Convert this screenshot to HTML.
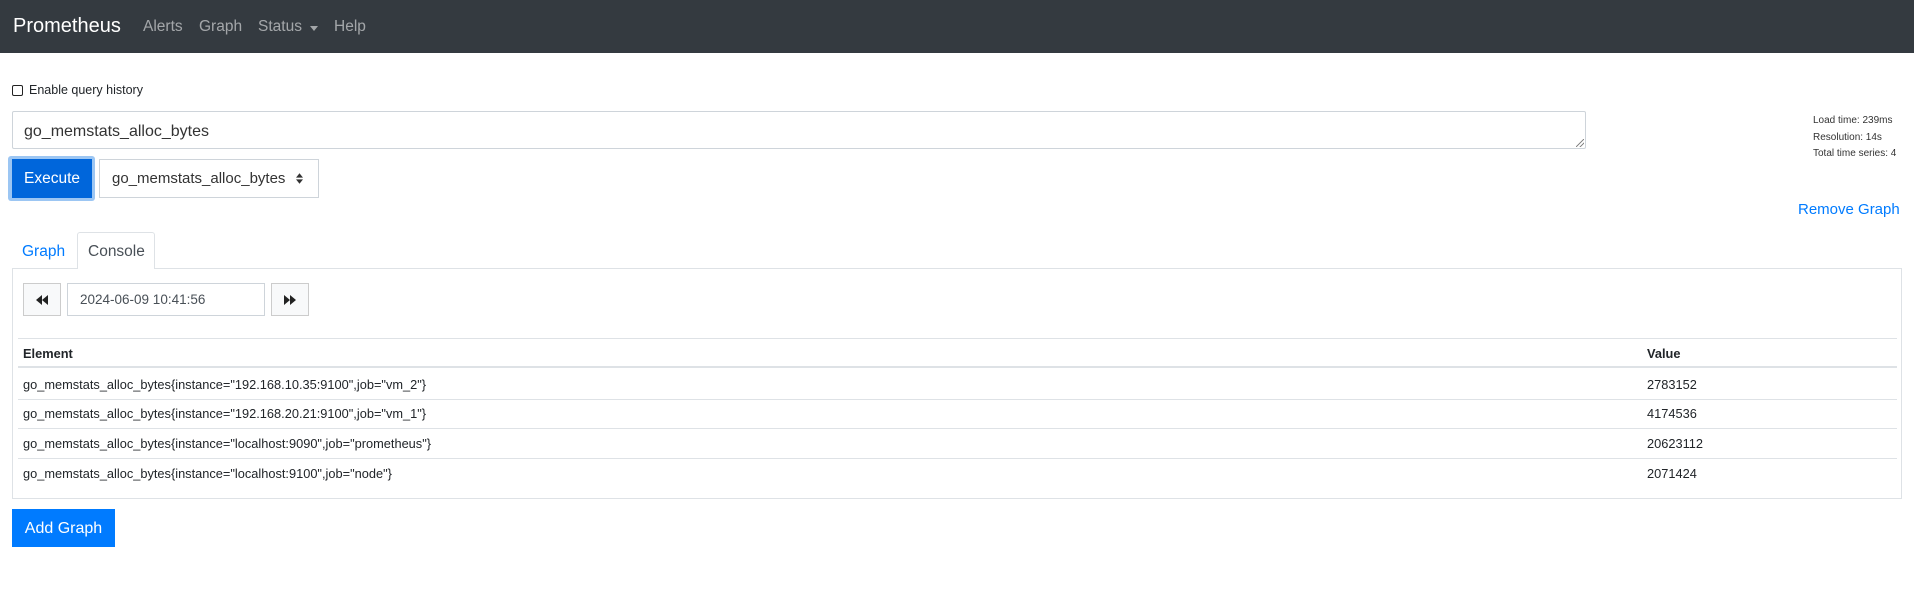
<!DOCTYPE html>
<html><head><style>
*{box-sizing:border-box;margin:0;padding:0}
body{width:1914px;height:604px;font-family:"Liberation Sans",sans-serif;background:#fff;position:relative;overflow:hidden;color:#212529}
.a{position:absolute;white-space:nowrap}
nav{position:absolute;left:0;top:0;width:1914px;height:53px;background:#343a40}
.brand{color:#fff;font-size:20px;left:13px;top:15px}
.nl{color:rgba(255,255,255,.55);font-size:15.5px;top:18px}
.ta{left:12px;top:111px;width:1574px;height:38px;border:1px solid #ced4da;border-radius:2px}
.btn{border:1px solid #ccc;background:#f8f9fa}
.t{font-size:12.8px}
</style></head><body>
<nav>
<div class="a brand">Prometheus</div>
<div class="a nl" style="left:143px">Alerts</div>
<div class="a nl" style="left:199px">Graph</div>
<div class="a nl" style="left:258px">Status</div>
<div class="a" style="left:310px;top:26px;width:0;height:0;border-left:4.5px solid transparent;border-right:4.5px solid transparent;border-top:5px solid rgba(255,255,255,.55)"></div>
<div class="a nl" style="left:334px">Help</div>
</nav>
<div class="a" style="left:12px;top:85px;width:11px;height:11px;border:1.5px solid #222;border-radius:2px"></div>
<div class="a" style="left:29px;top:83px;font-size:12.5px">Enable query history</div>
<div class="a ta"></div>
<div class="a" style="left:24px;top:123px;font-size:16px;color:#333">go_memstats_alloc_bytes</div>
<div class="a" style="left:1576px;top:139px;width:8px;height:8px;background:linear-gradient(135deg,transparent 45%,#888 45%,#888 55%,transparent 55%,transparent 70%,#888 70%,#888 80%,transparent 80%)"></div>
<div class="a" style="left:8px;top:156px;width:87px;height:45px;border-radius:3px;background:#9cc6f3"></div>
<div class="a" style="left:12px;top:159px;width:80px;height:39px;background:#0066db;color:#fff;font-size:15.5px;text-align:center;line-height:40px">Execute</div>
<div class="a" style="left:99px;top:159px;width:220px;height:39px;border:1px solid #ced4da;font-size:15px;line-height:38px;padding-left:12px;color:#333">go_memstats_alloc_bytes</div>
<svg class="a" style="left:296px;top:173px" width="7" height="11" viewBox="0 0 8 12"><path d="M4 0L8 5H0Z M0 7H8L4 12Z" fill="#333"/></svg>
<div class="a" style="left:1813px;top:113px;font-size:10px;line-height:16.5px;color:#333">Load time: 239ms<br>Resolution: 14s<br>Total time series: 4</div>
<div class="a" style="left:1798px;top:201px;font-size:15px;color:#007bff">Remove Graph</div>
<div class="a" style="left:22px;top:243px;font-size:15.5px;color:#007bff">Graph</div>
<div class="a" style="left:77px;top:232px;width:78px;height:37px;border:1px solid #dee2e6;border-bottom:none;background:#fff;z-index:2;border-radius:3px 3px 0 0"></div>
<div class="a" style="left:88px;top:243px;font-size:15.5px;color:#495057;z-index:3">Console</div>
<div class="a" style="left:12px;top:268px;width:1890px;height:231px;border:1px solid #dee2e6"></div>
<div class="a btn" style="left:23px;top:283px;width:38px;height:33px"></div>
<svg class="a" style="left:36px;top:295px" width="12" height="10" viewBox="0 0 12 10"><path d="M6 0V10L0 5Z M12 0V10L6 5Z" fill="#222"/></svg>
<div class="a" style="left:67px;top:283px;width:198px;height:33px;border:1px solid #ced4da;font-size:13.5px;line-height:31px;padding-left:12px;color:#495057">2024-06-09 10:41:56</div>
<div class="a btn" style="left:271px;top:283px;width:38px;height:33px"></div>
<svg class="a" style="left:284px;top:295px" width="12" height="10" viewBox="0 0 12 10"><path d="M0 0V10L6 5Z M6 0V10L12 5Z" fill="#222"/></svg>
<div class="a" style="left:18px;top:338px;width:1879px;border-top:1px solid #dee2e6"></div>
<div class="a t" style="left:23px;top:346px;font-weight:bold">Element</div>
<div class="a t" style="left:1647px;top:346px;font-weight:bold">Value</div>
<div class="a" style="left:18px;top:366px;width:1879px;border-top:2px solid #dee2e6"></div>
<div class="a t" style="left:23px;top:377px">go_memstats_alloc_bytes{instance="192.168.10.35:9100",job="vm_2"}</div>
<div class="a t" style="left:1647px;top:377px">2783152</div>
<div class="a" style="left:18px;top:399px;width:1879px;border-top:1px solid #dee2e6"></div>
<div class="a t" style="left:23px;top:406px">go_memstats_alloc_bytes{instance="192.168.20.21:9100",job="vm_1"}</div>
<div class="a t" style="left:1647px;top:406px">4174536</div>
<div class="a" style="left:18px;top:428px;width:1879px;border-top:1px solid #dee2e6"></div>
<div class="a t" style="left:23px;top:436px">go_memstats_alloc_bytes{instance="localhost:9090",job="prometheus"}</div>
<div class="a t" style="left:1647px;top:436px">20623112</div>
<div class="a" style="left:18px;top:458px;width:1879px;border-top:1px solid #dee2e6"></div>
<div class="a t" style="left:23px;top:466px">go_memstats_alloc_bytes{instance="localhost:9100",job="node"}</div>
<div class="a t" style="left:1647px;top:466px">2071424</div>
<div class="a" style="left:12px;top:509px;width:103px;height:38px;background:#007bff;color:#fff;font-size:16px;text-align:center;line-height:39px">Add Graph</div>
</body></html>
